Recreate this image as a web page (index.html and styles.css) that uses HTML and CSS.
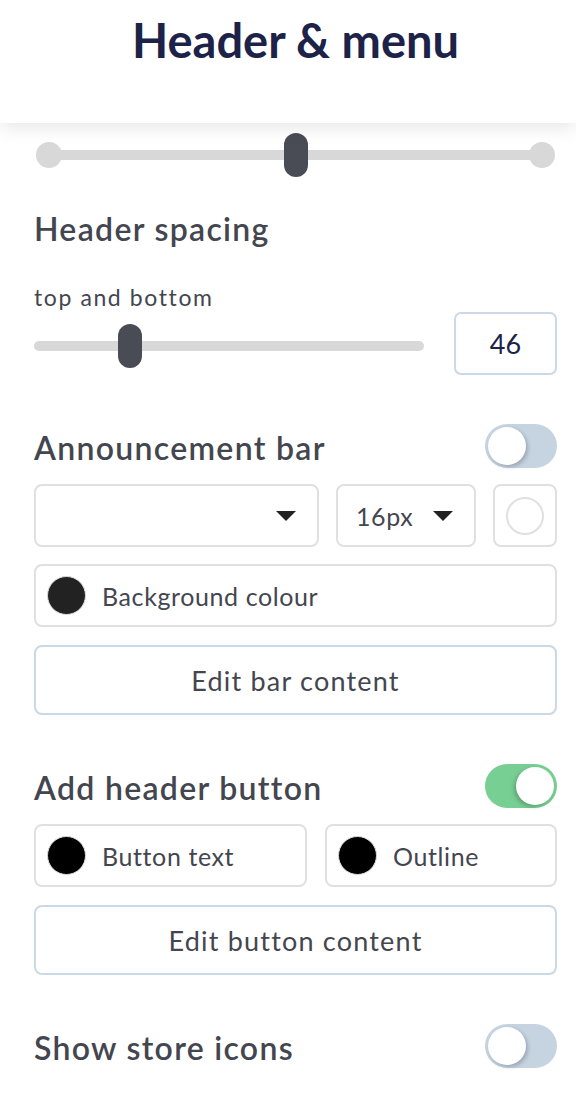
FILE: index.html
```html
<!DOCTYPE html>
<html lang="en">
<head>
  <meta charset="UTF-8">
  <meta name="viewport" content="width=device-width, initial-scale=1">
  <title>Header &amp; menu</title>
  <link rel="stylesheet" href="styles.css">
</head>
<body>

<header class="topbar">
  <h1>Header &amp; menu</h1>
</header>

<main class="panel">

  <!-- Layout steps slider -->
  <div class="steps">
    <span class="dot"></span>
    <span class="line"></span>
    <span class="dot"></span>
    <span class="thumb" style="left: 50%"></span>
  </div>

  <!-- Header spacing -->
  <section class="spacing">
    <h2>Header spacing</h2>
    <p class="sub">top and bottom</p>
    <div class="range-row">
      <div class="range">
        <span class="thumb" style="left: 24.6%"></span>
      </div>
      <div class="num">46</div>
    </div>
  </section>

  <!-- Announcement bar -->
  <section class="group">
    <div class="group-head">
      <h2>Announcement bar</h2>
      <span class="toggle"></span>
    </div>
    <div class="font-row">
      <div class="box select"><span class="value"></span><span class="caret"></span></div>
      <div class="box select"><span class="value">16px</span><span class="caret"></span></div>
      <div class="box swatch"><span class="ring"></span></div>
    </div>
    <div class="box colour">
      <span class="chip chip-dark"></span>
      <span>Background colour</span>
    </div>
    <button class="edit">Edit bar content</button>
  </section>

  <!-- Header button -->
  <section class="group">
    <div class="group-head">
      <h2>Add header button</h2>
      <span class="toggle on"></span>
    </div>
    <div class="pair-row">
      <div class="box colour">
        <span class="chip"></span>
        <span>Button text</span>
      </div>
      <div class="box colour">
        <span class="chip"></span>
        <span>Outline</span>
      </div>
    </div>
    <button class="edit">Edit button content</button>
  </section>

  <!-- Store icons -->
  <section class="group">
    <div class="group-head">
      <h2>Show store icons</h2>
      <span class="toggle"></span>
    </div>
  </section>

</main>

</body>
</html>
```

FILE: styles.css
```css
/* Global Styles */
* {
  box-sizing: border-box;
}

body {
  margin: 0;
  font-family: 'Lato', 'Noto Sans', sans-serif;
  background: #fff;
  color: #44464f;
}

.topbar {
  position: relative;
  z-index: 1;
  height: 123px;
  padding: 12px 19px 0 34px;
  background: #fff;
  box-shadow: 0 4px 18px rgba(0, 0, 0, 0.1);
}

h1 {
  margin: 0;
  text-align: center;
  font-size: 47px;
  line-height: 56px;
  font-weight: 700;
  color: #1d2348;
}

.panel {
  padding: 0 19px 40px 34px;
}

h2 {
  margin: 0;
  font-size: 32px;
  line-height: 36px;
  font-weight: 600;
  letter-spacing: 1.3px;
  color: #44464f;
}

/* Sliders */
.steps {
  position: relative;
  display: flex;
  align-items: center;
  height: 44px;
  margin: 10px 2px 34px;
}

.steps .dot {
  width: 26px;
  height: 26px;
  border-radius: 50%;
  background: #d8d8d8;
}

.steps .line {
  flex: 1;
  height: 10px;
  margin: 0 -2px;
  background: #d8d8d8;
}

.thumb {
  position: absolute;
  top: 0;
  width: 24px;
  height: 44px;
  margin-left: -12px;
  border-radius: 12px;
  background: #494b55;
}

.sub {
  margin: 37px 0 2px;
  font-size: 23px;
  line-height: 26px;
  letter-spacing: 1.6px;
  color: #44464f;
}

.range-row {
  display: flex;
  align-items: center;
  gap: 30px;
}

.range {
  position: relative;
  flex: 1;
  height: 10px;
  margin-top: 5px;
  border-radius: 5px;
  background: #d8d8d8;
}

.range .thumb {
  top: -17px;
}

.num {
  width: 103px;
  height: 63px;
  display: flex;
  align-items: center;
  justify-content: center;
  border: 2px solid #cbd8e5;
  border-radius: 7px;
  font-size: 27px;
  color: #1d2348;
}

/* Groups */
.group {
  display: flex;
  flex-direction: column;
  gap: 17px;
  margin-top: 49px;
}

.group-head {
  display: flex;
  align-items: center;
  justify-content: space-between;
  height: 44px;
  margin-bottom: -1px;
}

.group-head h2 {
  padding-top: 3px;
}

.toggle {
  position: relative;
  width: 72px;
  height: 44px;
  border-radius: 22px;
  background: #c6d4e2;
}

.toggle::after {
  content: "";
  position: absolute;
  top: 3px;
  left: 3px;
  width: 38px;
  height: 38px;
  border-radius: 50%;
  background: #fff;
  box-shadow: 2px 2px 4px rgba(0, 0, 0, 0.22);
}

.toggle.on {
  background: #78cf93;
}

.toggle.on::after {
  left: 31px;
  box-shadow: -2px 2px 4px rgba(0, 0, 0, 0.22);
}

.box {
  display: flex;
  align-items: center;
  height: 63px;
  border: 2px solid #e0e0e0;
  border-radius: 8px;
  background: #fff;
  font-size: 25px;
  letter-spacing: 0.6px;
  color: #44464f;
}

.font-row {
  display: grid;
  grid-template-columns: 285px 140px 1fr;
  column-gap: 17px;
}

.select {
  justify-content: space-between;
  padding: 0 21px 0 18px;
}

.caret {
  width: 0;
  height: 0;
  border-left: 10px solid transparent;
  border-right: 10px solid transparent;
  border-top: 10px solid #222;
}

.swatch {
  justify-content: center;
}

.ring {
  width: 38px;
  height: 38px;
  border: 2px solid #e0e0e0;
  border-radius: 50%;
}

.colour {
  gap: 16px;
  padding-left: 11px;
}

.chip {
  width: 39px;
  height: 39px;
  border: 1px solid #dcdcdc;
  border-radius: 50%;
  background: #000;
}

.chip-dark {
  background: #222;
}

.pair-row {
  display: grid;
  grid-template-columns: 273px 1fr;
  column-gap: 18px;
}

.edit {
  height: 70px;
  margin-top: 1px;
  border: 2px solid #cbd8e5;
  border-radius: 8px;
  background: #fff;
  font-family: inherit;
  font-size: 27px;
  letter-spacing: 1.2px;
  color: #44464f;
  cursor: pointer;
}
```
